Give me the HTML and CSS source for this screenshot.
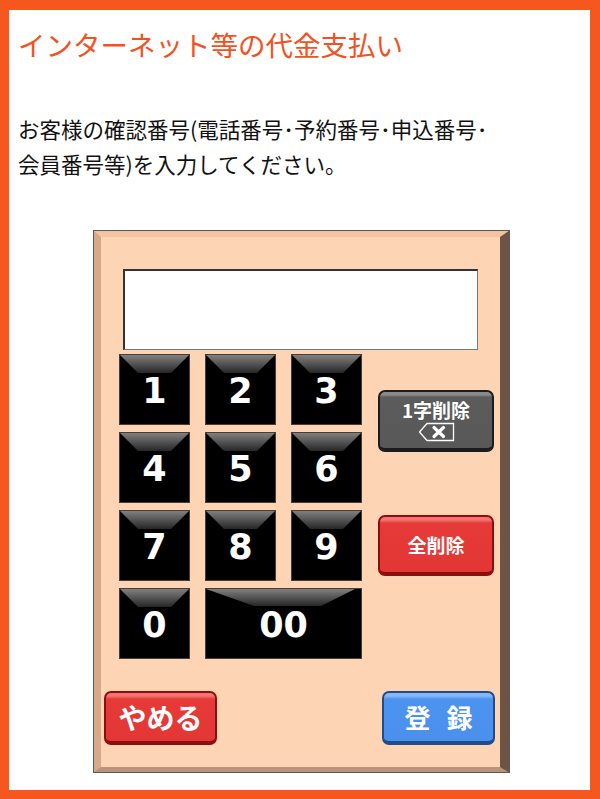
FILE: index.html
```html
<!DOCTYPE html>
<html lang="ja">
<head>
<meta charset="utf-8">
<title>インターネット等の代金支払い</title>
<link rel="stylesheet" href="styles.css">
</head>
<body>
<div class="frame">
  <h1 class="title">インターネット等の代金支払い</h1>
  <p class="desc">お客様の確認番号(電話番号･予約番号･申込番号･<br>会員番号等)を入力してください。</p>
  <div class="panel">
    <div class="display"></div>
    <div class="main">
      <div class="keys">
        <div class="key"><span>1</span></div>
        <div class="key"><span>2</span></div>
        <div class="key"><span>3</span></div>
        <div class="key"><span>4</span></div>
        <div class="key"><span>5</span></div>
        <div class="key"><span>6</span></div>
        <div class="key"><span>7</span></div>
        <div class="key"><span>8</span></div>
        <div class="key"><span>9</span></div>
        <div class="key"><span>0</span></div>
        <div class="key key-wide"><span>00</span></div>
      </div>
      <div class="side">
        <div class="btn btn-gray btn-bs">
          <span class="bs-label">1字削除</span>
          <svg class="bs-icon" width="37" height="20" viewBox="0 0 37 20">
            <path d="M9 1.5 H35.5 V18.5 H9 L1.5 10 Z" fill="none" stroke="#ffffff" stroke-width="1.3"/>
            <path d="M16 5.5 L25.5 14.5 M25.5 5.5 L16 14.5" stroke="#ffffff" stroke-width="3.2" stroke-linecap="round"/>
          </svg>
        </div>
        <div class="btn btn-red btn-clear">全削除</div>
      </div>
    </div>
    <div class="bottom">
      <div class="btn btn-red btn-big">やめる</div>
      <div class="btn btn-blue btn-big btn-ok">登 録</div>
    </div>
  </div>
</div>
</body>
</html>
```
FILE: styles.css
```css
html, body {
  margin: 0;
  padding: 0;
  background: #ffffff;
}
.frame {
  box-sizing: border-box;
  width: 600px;
  height: 799px;
  border: 10px solid #f5571f;
  border-left-width: 9px;
  border-bottom-width: 9px;
  background: #ffffff;
  font-family: "Noto Sans CJK JP", "Noto Sans", sans-serif;
  overflow: hidden;
}
.title {
  margin: 0;
  padding: 16px 0 0 9px;
  font-size: 27.5px;
  line-height: 37px;
  font-weight: 400;
  color: #f4511e;
}
.desc {
  margin: 48px 0 0 0;
  padding-left: 9px;
  font-size: 21.5px;
  line-height: 35px;
  color: #111111;
}
.panel {
  box-sizing: border-box;
  width: 417px;
  height: 543px;
  margin: 49px 0 0 84px;
  background: #fdd5b5;
  border-style: solid;
  border-width: 7px 10px 6px 8px;
  border-color: #f4c4a2 #6e5444 #b9937a #d6a98a;
  outline: 1px solid #5a5a5a;
  outline-offset: -1px;
}
.display {
  box-sizing: border-box;
  width: 355px;
  height: 81px;
  margin: 32px 0 0 22px;
  background: #ffffff;
  border: 1px solid #7a7a7a;
  border-top: 2px solid #333333;
  border-left: 2px solid #333333;
}
.main {
  display: flex;
  margin-top: 4px;
}
.keys {
  display: grid;
  grid-template-columns: 71px 71px 71px;
  grid-auto-rows: 71px;
  column-gap: 15px;
  row-gap: 7px;
  margin-left: 18px;
}
.key {
  position: relative;
  box-sizing: border-box;
  background: #000000;
  border: 1px solid #4b3b30;
  display: flex;
  align-items: center;
  justify-content: center;
  overflow: hidden;
}
.key::before {
  content: "";
  position: absolute;
  left: 0;
  right: 0;
  top: 0;
  height: 18px;
  background: linear-gradient(#808080, #262626);
  clip-path: polygon(0 0, 100% 0, calc(100% - 18px) 100%, 18px 100%);
}
.key-wide {
  grid-column: span 2;
}
.key-wide::before {
  height: 17px;
  clip-path: polygon(0 0, calc(100% - 6px) 0, calc(100% - 40px) 100%, 48px 100%);
}
.key span {
  position: relative;
  color: #ffffff;
  font-family: "DejaVu Sans", "Noto Sans", sans-serif;
  font-weight: 700;
  font-size: 35px;
  line-height: 1;
  margin-top: 3px;
}
.side {
  display: flex;
  flex-direction: column;
  margin-left: 16px;
  width: 116px;
}
.btn {
  box-sizing: border-box;
  border-radius: 7px;
  color: #ffffff;
  font-weight: 700;
  display: flex;
  flex-direction: column;
  align-items: center;
  justify-content: center;
  border-style: solid;
  border-width: 2px 2px 4px 2px;
}
.btn-gray {
  background: linear-gradient(#8a8a8a 0, #8a8a8a 3px, #5c5c5c 5px, #585858 100%);
  border-color: #1c1c1c;
}
.btn-red {
  background: linear-gradient(#f37474 0, #f37474 3px, #e53a37 6px, #e33735 100%);
  border-color: #8c0f0f;
}
.btn-blue {
  background: linear-gradient(#86b8f6 0, #86b8f6 3px, #4c93ef 6px, #4a90ec 100%);
  border-color: #1f4c8c;
}
.btn-bs {
  margin-top: 36px;
  height: 62px;
}
.bs-label {
  font-size: 19px;
  line-height: 22px;
}
.bs-icon {
  display: block;
  margin-top: 1px;
}
.btn-clear {
  margin-top: 63px;
  height: 61px;
  font-size: 19px;
}
.bottom {
  display: flex;
  justify-content: space-between;
  margin-top: 32px;
  padding: 0 5px 0 3px;
}
.btn-big {
  width: 113px;
  height: 54px;
  font-size: 28px;
  line-height: 1;
}
.btn-ok {
  font-size: 26px;
  word-spacing: 10px;
}
```
